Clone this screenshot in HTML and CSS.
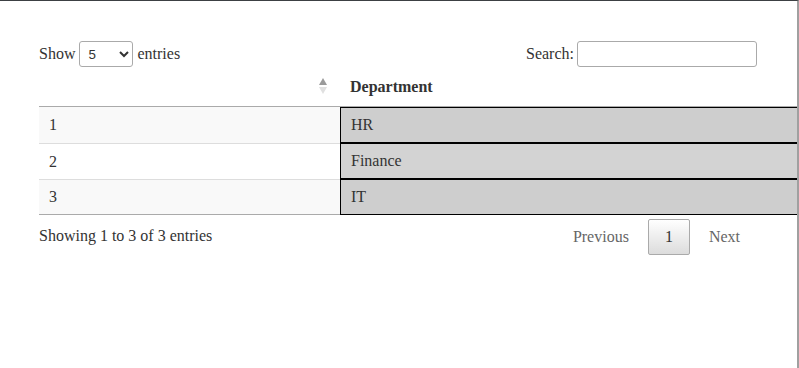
FILE: index.html
```html
<!DOCTYPE html>
<html>
<head>
<meta charset="utf-8">
<link rel="stylesheet" href="styles.css">
</head>
<body>
<div class="frame">
  <div class="wrapper">
    <div class="controls">
      <label class="length">Show <select class="length-select"><option>5</option><option>10</option></select> entries</label>
      <label class="filter">Search:<input class="search" type="search"></label>
    </div>
    <table class="data">
      <colgroup><col class="c1"><col class="c2"></colgroup>
      <thead>
        <tr><th class="sorting"><span class="sort-icon"><span class="up"></span><span class="down"></span></span></th><th>Department</th></tr>
      </thead>
      <tbody>
        <tr class="odd"><td>1</td><td class="dept">HR</td></tr>
        <tr class="even"><td>2</td><td class="dept">Finance</td></tr>
        <tr class="odd"><td>3</td><td class="dept">IT</td></tr>
      </tbody>
    </table>
    <div class="footer">
      <div class="info">Showing 1 to 3 of 3 entries</div>
      <div class="paginate">
        <span class="pbtn disabled">Previous</span>
        <span class="pbtn current">1</span>
        <span class="pbtn disabled">Next</span>
      </div>
    </div>
  </div>
</div>
</body>
</html>
```
FILE: styles.css
```css
html, body {
  margin: 0;
  padding: 0;
  background: #fff;
}
body {
  font-family: "Liberation Serif", "Times New Roman", serif;
  font-size: 16px;
  color: #333;
}
.frame {
  width: 799px;
  height: 368px;
  box-sizing: border-box;
  border-top: 1px solid #3c4043;
  border-right: 2px solid #a0a0a0;
  overflow: hidden;
  padding: 40px 0 0 39px;
}
.wrapper {
  width: 718px;
}
.controls {
  display: flex;
  justify-content: space-between;
  align-items: center;
  height: 26px;
  margin-bottom: 1px;
  line-height: 18px;
}
.length, .filter {
  display: flex;
  align-items: center;
  white-space: pre;
}
.length-select {
  width: 54px;
  height: 26px;
  box-sizing: border-box;
  border: 1px solid #aaa;
  border-radius: 3px;
  padding: 4px;
  background-color: transparent;
  color: #333;
  font-family: "Liberation Sans", Arial, sans-serif;
  font-size: 13.33px;
}
.search {
  width: 180px;
  height: 26px;
  box-sizing: border-box;
  border: 1px solid #aaa;
  border-radius: 3px;
  padding: 5px;
  margin-left: 3px;
  background-color: transparent;
  font-size: 13.33px;
}
.data {
  width: 760px;
  table-layout: fixed;
  border-collapse: separate;
  border-spacing: 0;
  line-height: 18px;
}
.c1 { width: 301px; }
.data th {
  text-align: left;
  font-weight: bold;
  padding: 10px 18px 10px 10px;
  border-bottom: 1px solid #aaa;
  position: relative;
  height: 18px;
}
.sort-icon {
  position: absolute;
  right: 12px;
  top: 10px;
  width: 9px;
  height: 18px;
}
.sort-icon .up {
  position: absolute;
  left: 0;
  top: 0;
  border-left: 4.5px solid transparent;
  border-right: 4.5px solid transparent;
  border-bottom: 7px solid #9a9a9a;
}
.sort-icon .down {
  position: absolute;
  left: 0;
  top: 9px;
  border-left: 4.5px solid transparent;
  border-right: 4.5px solid transparent;
  border-top: 7px solid #e0e0e0;
}
.data tbody tr {
  height: 36px;
}
.data td {
  padding: 8px 10px;
}
.data tbody tr + tr td {
  border-top: 1px solid #ddd;
}
.data tbody tr.odd td {
  background: #f9f9f9;
}
.data tbody tr:last-child td {
  border-bottom: 1px solid #aaa;
}
.data tbody td.dept,
.data tbody tr + tr td.dept,
.data tbody tr:last-child td.dept {
  border: 1px solid #000;
  background: #d3d3d3;
  padding: 8px 10px;
}
.data tbody tr.odd td.dept {
  background: #cecece;
}
.footer {
  display: flex;
  justify-content: space-between;
  align-items: flex-start;
}
.info {
  padding-top: 12px;
  line-height: 18px;
}
.paginate {
  padding-top: 4px;
  display: flex;
}
.pbtn {
  display: block;
  padding: 8px 16px;
  line-height: 18px;
  margin-left: 2px;
  border: 1px solid transparent;
  border-radius: 2px;
  min-width: 24px;
  text-align: center;
  color: #666;
}
.pbtn.current {
  color: #333;
  border: 1px solid #aaa;
  min-width: 8px;
  background: linear-gradient(to bottom, #fff 0%, #dcdcdc 100%);
}
```
